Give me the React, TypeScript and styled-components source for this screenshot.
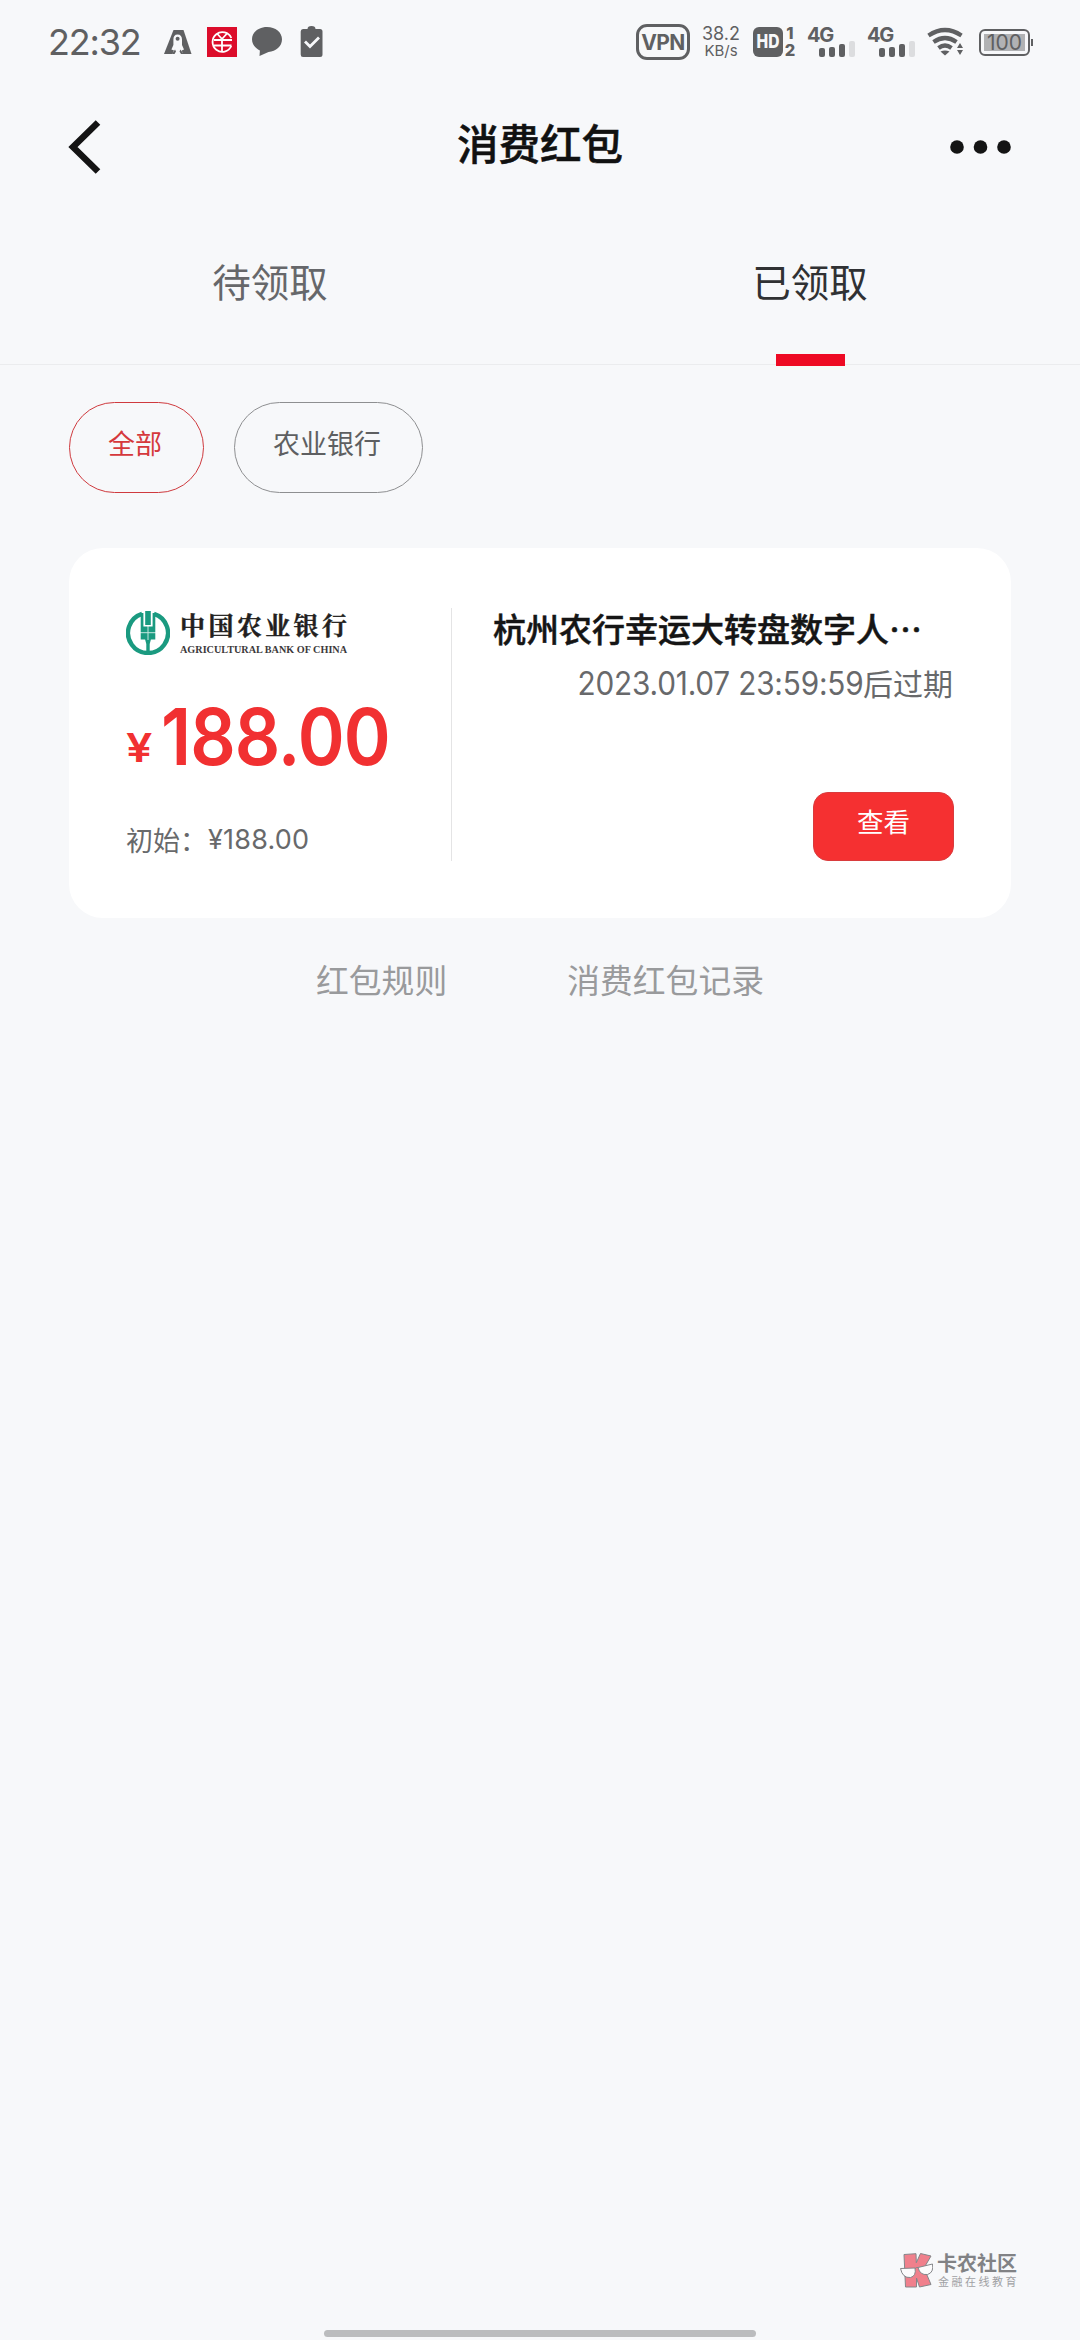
import React from 'react';
import styled, { createGlobalStyle } from 'styled-components';

const latin = `Inter, 'Noto Sans CJK SC', sans-serif`;
const cjk = `'Noto Sans CJK SC', sans-serif`;
const ink = '#5f6062';

const GlobalStyle = createGlobalStyle`
  * { box-sizing: border-box; }
  body { margin: 0; background: #f7f8fa; }
  button { font: inherit; background: none; border: 0; padding: 0; }
  svg { display: block; flex: none; }
`;

const Screen = styled.main`
  display: flex;
  flex-direction: column;
  width: 1080px;
  height: 2340px;
  overflow: hidden;
  background: #f7f8fa;
  font-family: ${cjk};
`;

const StatusBar = styled.div`
  display: flex;
  justify-content: space-between;
  height: 84px;
  padding: 0 47px 0 48px;
  font-family: ${latin};
  color: ${ink};
`;

const StatusGroup = styled.div`
  display: flex;
  align-items: center;
  height: 84px;
`;

const Clock = styled.time`
  width: 116px;
  font-size: 36px;
  line-height: 40px;
  font-weight: 400;
  letter-spacing: -1.2px;
  white-space: nowrap;
`;

const VpnBadge = styled.span`
  display: flex;
  align-items: center;
  justify-content: center;
  width: 54px;
  height: 36px;
  margin-right: 12px;
  border: 3px solid ${ink};
  border-radius: 11px;
  font-size: 21px;
  font-weight: 700;
  letter-spacing: -0.6px;
`;

const Speed = styled.span`
  display: flex;
  flex-direction: column;
  align-items: center;
  width: 38px;
  margin-right: 13px;
  font-size: 18px;
  line-height: 17px;
  white-space: nowrap;
`;

const SpeedUnit = styled.span`
  font-size: 15px;
`;

const HdBadge = styled.span`
  display: flex;
  align-items: center;
  justify-content: center;
  width: 30px;
  height: 30px;
  border-radius: 6px;
  background: ${ink};
  color: #f7f8fa;
`;

const HdText = styled.span`
  font-size: 19px;
  line-height: 30px;
  font-weight: 800;
  transform: scaleX(0.82);
`;

const SimNumbers = styled.span`
  display: flex;
  flex-direction: column;
  align-items: center;
  width: 14px;
  margin-right: 10px;
  font-size: 16.5px;
  line-height: 17px;
  font-weight: 800;
`;

const Signal = styled.span`
  display: flex;
  flex-direction: column;
  width: 60px;
  height: 30px;
`;

const SignalLabel = styled.span`
  height: 14px;
  font-size: 20px;
  line-height: 16px;
  font-weight: 700;
  letter-spacing: -1.4px;
`;

const SignalBars = styled.span`
  display: flex;
  align-items: flex-end;
  gap: 4px;
  height: 16px;
  padding-left: 12px;
`;

const SignalBar = styled.i<{ $height: number; $off?: boolean }>`
  width: 6px;
  height: ${p => p.$height}px;
  border-radius: 2px;
  background: ${p => (p.$off ? '#dcdddf' : ink)};
`;

const Battery = styled.span`
  display: flex;
  align-items: center;
  justify-content: center;
  width: 51px;
  height: 27px;
  margin-left: 15px;
  border: 2px solid ${ink};
  border-radius: 6px;
`;

const BatteryLevel = styled.span`
  display: flex;
  align-items: center;
  justify-content: center;
  width: 41px;
  height: 17px;
  background: #b1b2b4;
  font-size: 21px;
  line-height: 17px;
`;

const BatteryTip = styled.i`
  width: 2px;
  height: 7px;
  margin-left: 1px;
  background: ${ink};
`;

const Header = styled.header`
  display: flex;
  align-items: center;
  justify-content: space-between;
  height: 126px;
  padding: 0 68px;
`;

const HeaderSide = styled.div<{ $end?: boolean }>`
  display: flex;
  justify-content: ${p => (p.$end ? 'flex-end' : 'flex-start')};
  width: 120px;
`;

const PageTitle = styled.h1`
  margin: 0 0 10px;
  font-size: 41.5px;
  line-height: 60px;
  font-weight: 500;
  color: #111;
  -webkit-text-stroke: 0.5px #111;
`;

const Tabs = styled.nav`
  display: grid;
  grid-template-columns: 1fr 1fr;
  height: 156px;
  background: linear-gradient(#ebecee, #ebecee) 0 154px / 100% 1px no-repeat;
`;

const Tab = styled.button<{ $active?: boolean }>`
  display: flex;
  flex-direction: column;
  align-items: center;
  justify-content: space-between;
  padding-top: 41px;
  font-size: 38.5px;
  line-height: 58px;
  color: ${p => (p.$active ? '#303133' : '#66676a')};
`;

const TabMarker = styled.i`
  width: 69px;
  height: 12px;
  background: #ee0a24;
`;

const Filters = styled.div`
  display: flex;
  gap: 30px;
  padding: 36px 69px 0;
`;

const Chip = styled.button<{ $active?: boolean; $width: number }>`
  width: ${p => p.$width}px;
  height: 91px;
  padding: 0 3px 10px 0;
  border: 1px solid ${p => (p.$active ? '#cf3a3e' : '#8e8f91')};
  border-radius: 46px;
  font-size: 27px;
  line-height: 40px;
  color: ${p => (p.$active ? '#d5383c' : '#5e5f61')};
`;

const Card = styled.article`
  display: flex;
  height: 370px;
  margin: 55px 69px 0;
  padding: 60px 57px 57px;
  border-radius: 34px;
  background: #fff;
`;

const Amounts = styled.section`
  display: flex;
  flex-direction: column;
  width: 326px;
  border-right: 1px solid #e4e4e5;
`;

const BankLogo = styled.div`
  display: flex;
  gap: 10px;
  height: 50px;
  padding-top: 3px;
`;

const BankNames = styled.div`
  display: flex;
  flex-direction: column;
  margin-top: -2px;
  color: #231f20;
  white-space: nowrap;
`;

const BankName = styled.span`
  font-size: 25px;
  line-height: 30px;
  height: 34px;
  font-weight: 700;
  font-family: 'Noto Serif CJK SC', 'Noto Sans CJK SC', serif;
  letter-spacing: 3.4px;
  -webkit-text-stroke: 0.4px #231f20;
`;

const BankNameEn = styled.span`
  font-family: 'Liberation Serif', serif;
  font-size: 10.2px;
  line-height: 14px;
  font-weight: 700;
  color: #3c393a;
`;

const Price = styled.div`
  display: flex;
  align-items: baseline;
  height: 100px;
  margin-top: 28px;
  font-family: ${latin};
  font-weight: 600;
  line-height: 100px;
  color: #f13031;
  white-space: nowrap;
`;

const Currency = styled.span`
  width: 35px;
  font-size: 40px;
  transform: translateY(-3px) scaleX(1.17);
  transform-origin: left;
`;

const Value = styled.span`
  font-size: 79px;
  letter-spacing: -1px;
  transform: scaleX(0.9);
  transform-origin: left;
`;

const Initial = styled.div`
  display: flex;
  align-items: center;
  height: 36px;
  margin: auto 0 3px;
  font-family: ${latin};
  font-size: 27px;
  line-height: 36px;
  color: #68696b;
  white-space: nowrap;
`;

const InitialLabel = styled.span`
  width: 82px;
  font-family: ${cjk};
`;

const InitialValue = styled.span`
  letter-spacing: 0.2px;
`;

const Details = styled.section`
  display: flex;
  flex: 1;
  flex-direction: column;
  align-items: flex-end;
`;

const OfferTitle = styled.h2`
  display: flex;
  align-self: flex-start;
  margin: -2px 0 0 41px;
  font-size: 33px;
  line-height: 44px;
  font-weight: 500;
  color: #151515;
  white-space: nowrap;
  -webkit-text-stroke: 0.5px #151515;
`;

const Expiry = styled.p`
  display: flex;
  align-items: baseline;
  margin: 10px 1px 0 0;
  height: 44px;
  font-size: 30px;
  line-height: 44px;
  color: #68696b;
  white-space: nowrap;
`;

const ExpiryTime = styled.span`
  font-family: ${latin};
  font-size: 32px;
  letter-spacing: -0.2px;
  transform: scaleX(0.93);
  transform-origin: right;
`;

const ViewButton = styled.button`
  width: 141px;
  height: 69px;
  margin-top: auto;
  padding-bottom: 11px;
  border: 1px solid #d93b3d;
  border-radius: 15px;
  background: #f53031;
  font-size: 26.5px;
  line-height: 40px;
  color: #fff;
`;

const Links = styled.nav`
  display: flex;
  justify-content: center;
  gap: 120px;
  margin-top: 37px;
  font-size: 32.8px;
  line-height: 48px;
  color: #999a9c;
`;

const Bottom = styled.footer`
  display: flex;
  flex-direction: column;
  margin-top: auto;
`;

const Watermark = styled.div`
  display: flex;
  align-self: flex-end;
  gap: 4px;
  width: 181px;
  height: 40px;
`;

const WatermarkText = styled.div`
  display: flex;
  flex-direction: column;
  margin-top: -1px;
  white-space: nowrap;
`;

const WatermarkName = styled.span`
  font-size: 20px;
  line-height: 26px;
  height: 25px;
  font-weight: 700;
  color: #818285;
`;

const WatermarkTag = styled.span`
  padding-left: 1px;
  font-size: 11px;
  line-height: 12px;
  letter-spacing: 2.5px;
  color: #a0a1a4;
`;

const HomeBar = styled.i`
  width: 432px;
  height: 7px;
  margin: 39px auto 3px;
  border-radius: 4px;
  background: #bbbcbe;
`;

function StatusIcons() {
  return (
    <svg width="160" height="32" viewBox="164 26 160 32" fill={ink}>
      <path d="M173.500 30h10L191.500 54H164z" />
      <path d="M177.600 34.500c3 0 4.400 2 4.400 5v5.500l2 4.500-2.200 1 1.200 3.800h-10.800l1.800-3.800-2.600-1 2-4.500v-5.500c0-3 1.200-5 4.200-5z" fill="#f7f8fa" />
      <circle cx="177.600" cy="38.800" r="2" />
      <path d="M172 54l3-4.500 1 2-1.500 2.500zM183.500 54l-3-4.500-1 2 1.500 2.500z" />
      <path d="M207 27h30v30h-30z" fill="#dc0d2b" />
      <g fill="none" stroke="#fff" strokeWidth="1.800">
        <path d="M231.300 38a9.800 9.800 0 1 0 0 8" />
        <path d="M217 33.500l5 5.500 5-5.500M222 39v12.500M214 40h18M214 45.500h17.500" />
      </g>
      <path d="M267 27c8.500 0 15 5.300 15 12.300 0 7.200-6 12.200-13.500 12.700l-9 4 .4-5.500C255 48 252 44 252 39.300 252 32.300 258.500 27 267 27z" />
      <path d="M303 29h4.500a4 3 0 0 1 8 0h4.500q2.500 0 2.500 2.500v23q0 2.500-2.500 2.500h-17q-2.300 0-2.300-2.500v-23q0-2.500 2.300-2.500z" />
      <path d="M305 41.500l5 5 9-9" fill="none" stroke="#f7f8fa" strokeWidth="2.800" />
    </svg>
  );
}

function WifiIcon() {
  return (
    <svg width="37" height="30" viewBox="927 28 37 30" fill="none" stroke={ink} strokeWidth="4.200">
      <path d="M928.500 36.500q16.500-11 33 0" />
      <path d="M933.500 43q11.500-8 23 0" />
      <path d="M938.500 49q6.500-5 13 0" />
      <path d="M940.500 52.500q4.500-2 9 0l-4.500 4z" fill={ink} stroke="none" />
      <path d="M957 49l3-5 3 5zM957 51h6l-3 5z" fill={ink} stroke="none" />
    </svg>
  );
}

function SignalMeter() {
  return (
    <Signal>
      <SignalLabel>4G</SignalLabel>
      <SignalBars>
        <SignalBar $height={9} />
        <SignalBar $height={10} />
        <SignalBar $height={13} />
        <SignalBar $height={16} $off />
      </SignalBars>
    </Signal>
  );
}

function BankEmblem() {
  return (
    <svg width="44" height="44" viewBox="0 0 44 44">
      <path d="M16 2.900A20 20 0 1 0 28 2.900" fill="none" stroke="#1a9a80" strokeWidth="4.400" />
      <path d="M19.200 0h5.600v14h-5.600zM14.700 2h2.700v13.500h9.200V2h2.700v26.500h-4.400L23.700 33v9h-3.400v-9l-1.200-4.500h-4.400z" fill="#1a9a80" />
      <path d="M14 21.700h16M22 15v14" stroke="#fff" strokeWidth="1" opacity=".75" />
    </svg>
  );
}

function CommunityLogo() {
  return (
    <svg width="34" height="38" viewBox="0 0 34 38" stroke="#85868a" strokeWidth="1">
      <path d="M5 3.500l12-.8.300 9L21.500 2.500 32 5l-7 12 7 16.500L20.500 36l-3-9v9H6.500z" fill="#f0808c" />
      <path d="M1.500 17.500L16 17q1.500 8-4.500 9.500-8 .8-10-9zM19 16.500L33.500 13q1.500 8.500-5 10.500-7.500 1-9.500-7z" fill="#fcfcfd" />
      <path d="M16 17.500q1.500-1.500 3-1" fill="none" />
    </svg>
  );
}

export default function App() {
  return (
    <Screen>
      <GlobalStyle />
      <StatusBar>
        <StatusGroup>
          <Clock>22:32</Clock>
          <StatusIcons />
        </StatusGroup>
        <StatusGroup>
          <VpnBadge>VPN</VpnBadge>
          <Speed>
            38.2
            <SpeedUnit>KB/s</SpeedUnit>
          </Speed>
          <HdBadge>
            <HdText>HD</HdText>
          </HdBadge>
          <SimNumbers>
            <span>1</span>
            <span>2</span>
          </SimNumbers>
          <SignalMeter />
          <SignalMeter />
          <WifiIcon />
          <Battery>
            <BatteryLevel>100</BatteryLevel>
          </Battery>
          <BatteryTip />
        </StatusGroup>
      </StatusBar>

      <Header>
        <HeaderSide>
          <svg width="34" height="54" viewBox="0 0 34 54" fill="none" stroke="#141414" strokeWidth="6.500">
            <path d="M30 2.500L5 27l25 24.500" />
          </svg>
        </HeaderSide>
        <PageTitle>消费红包</PageTitle>
        <HeaderSide $end>
          <svg width="62" height="14" viewBox="0 0 62 14" fill="#141414">
            <circle cx="7" cy="7" r="6.800" />
            <circle cx="30.500" cy="7" r="6.800" />
            <circle cx="54" cy="7" r="6.800" />
          </svg>
        </HeaderSide>
      </Header>

      <Tabs>
        <Tab>待领取</Tab>
        <Tab $active>
          已领取
          <TabMarker />
        </Tab>
      </Tabs>

      <Filters>
        <Chip $active $width={135}>全部</Chip>
        <Chip $width={189}>农业银行</Chip>
      </Filters>

      <Card>
        <Amounts>
          <BankLogo>
            <BankEmblem />
            <BankNames>
              <BankName>中国农业银行</BankName>
              <BankNameEn>AGRICULTURAL BANK OF CHINA</BankNameEn>
            </BankNames>
          </BankLogo>
          <Price>
            <Currency>¥</Currency>
            <Value>188.00</Value>
          </Price>
          <Initial>
            <InitialLabel>初始：</InitialLabel>
            <InitialValue>¥188.00</InitialValue>
          </Initial>
        </Amounts>
        <Details>
          <OfferTitle>杭州农行幸运大转盘数字人⋯</OfferTitle>
          <Expiry>
            <ExpiryTime>2023.01.07 23:59:59</ExpiryTime>后过期
          </Expiry>
          <ViewButton>查看</ViewButton>
        </Details>
      </Card>

      <Links>
        <span>红包规则</span>
        <span>消费红包记录</span>
      </Links>

      <Bottom>
        <Watermark>
          <CommunityLogo />
          <WatermarkText>
            <WatermarkName>卡农社区</WatermarkName>
            <WatermarkTag>金融在线教育</WatermarkTag>
          </WatermarkText>
        </Watermark>
        <HomeBar />
      </Bottom>
    </Screen>
  );
}
